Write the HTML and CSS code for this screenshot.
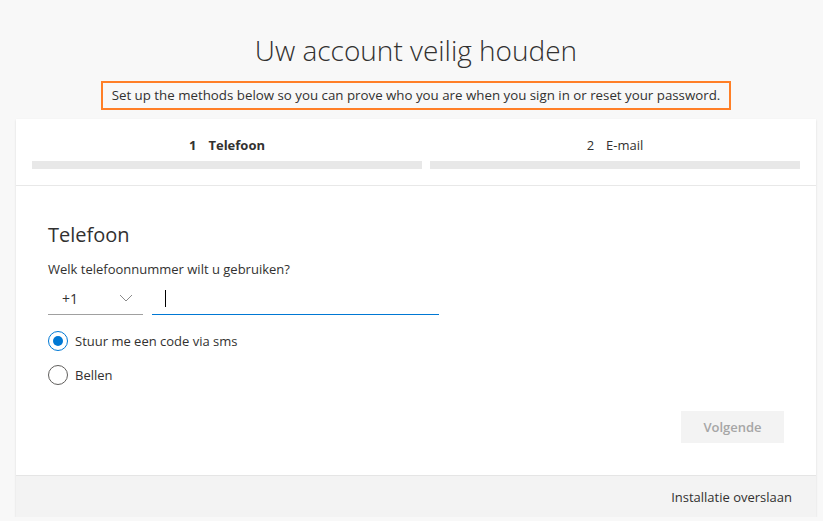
FILE: index.html
```html
<!DOCTYPE html>
<html>
<head>
<meta charset="utf-8">
<link rel="stylesheet" href="styles.css">
</head>
<body>
<div class="page">
  <header class="head">
    <h1 class="title">Uw account veilig houden</h1>
    <p class="subtitle">Set up the methods below so you can prove who you are when you sign in or reset your password.</p>
  </header>
  <section class="card">
    <div class="steps">
      <div class="step step-one">
        <div class="step-label active"><span class="num">1</span>Telefoon</div>
        <div class="bar"></div>
      </div>
      <div class="step step-two">
        <div class="step-label"><span class="num">2</span>E-mail</div>
        <div class="bar"></div>
      </div>
    </div>
    <div class="body">
      <h2 class="section-title">Telefoon</h2>
      <p class="question">Welk telefoonnummer wilt u gebruiken?</p>
      <div class="phone-row">
        <div class="country">
          <span>+1</span>
          <svg class="chev" width="14" height="8" viewBox="0 0 14 8"><path d="M1 1 L7 7 L13 1" fill="none" stroke="#8a8a8a" stroke-width="1"/></svg>
        </div>
        <div class="number"><span class="caret"></span></div>
      </div>
      <label class="radio"><span class="dot checked"></span>Stuur me een code via sms</label>
      <label class="radio"><span class="dot"></span>Bellen</label>
      <div class="actions">
        <button class="next">Volgende</button>
      </div>
    </div>
    <footer class="foot">
      <span class="skip">Installatie overslaan</span>
    </footer>
  </section>
</div>
</body>
</html>
```

FILE: styles.css
```css
html, body {
  margin: 0;
  padding: 0;
  background: #f8f8f8;
  font-family: "Open Sans", "Noto Sans", sans-serif;
  color: #323130;
}
.page {
  width: 800px;
  margin-left: 16px;
}
.head {
  display: flex;
  flex-direction: column;
  align-items: center;
  padding-top: 31px;
}
.title {
  margin: 0;
  font-weight: 300;
  font-size: 28px;
  line-height: 38px;
  color: #323130;
}
.subtitle {
  margin: 12px 0 9px;
  border: 2px solid #ff7f27;
  padding: 3px 9px;
  font-size: 13.3px;
  line-height: 19px;
  color: #323130;
}
.card {
  background: #fff;
  box-shadow: 0 1px 2px rgba(0,0,0,0.12);
}
.steps {
  display: flex;
  gap: 8px;
  padding: 16px 16px 16px;
  border-bottom: 1px solid #e8e8e8;
}
.step-one { width: 390px; }
.step-two { width: 370px; }
.step-label {
  text-align: center;
  font-size: 13px;
  line-height: 18px;
  padding-top: 1px;
  margin-bottom: 7px;
}
.step-label.active { font-weight: 700; }
.num { margin-right: 12px; }
.bar {
  height: 8px;
  background: #e8e8e8;
}
.body {
  padding: 35px 32px 32px;
}
.section-title {
  margin: 0;
  font-weight: 400;
  font-size: 20px;
  line-height: 28px;
}
.question {
  margin: 11px 0 0;
  font-size: 13px;
  line-height: 18px;
}
.phone-row {
  display: flex;
  gap: 9px;
  margin-top: 5px;
}
.country {
  width: 95px;
  height: 32px;
  box-sizing: border-box;
  border-bottom: 1px solid #a0a0a0;
  display: flex;
  align-items: center;
  justify-content: space-between;
  padding: 0 10px 0 14px;
  font-size: 14px;
}
.chev { margin-top: -2px; }
.number {
  width: 287px;
  height: 32px;
  box-sizing: border-box;
  border-bottom: 1px solid #0078d4;
  display: flex;
  align-items: center;
  padding-left: 13px;
}
.caret {
  width: 1px;
  height: 17px;
  background: #000;
}
.radio {
  display: flex;
  align-items: center;
  gap: 7px;
  font-size: 13px;
  line-height: 20px;
  margin-top: 14px;
}
.radio + .radio { margin-top: 14px; }
.phone-row + .radio { margin-top: 16px; }
.dot {
  width: 20px;
  height: 20px;
  box-sizing: border-box;
  border: 1px solid #605e5c;
  border-radius: 50%;
  position: relative;
}
.dot.checked { border-color: #0078d4; }
.dot.checked::after {
  content: "";
  position: absolute;
  left: 4px;
  top: 4px;
  width: 10px;
  height: 10px;
  border-radius: 50%;
  background: #0078d4;
}
.actions {
  display: flex;
  justify-content: flex-end;
  margin-top: 26px;
}
.next {
  width: 103px;
  height: 32px;
  border: none;
  background: #f3f3f3;
  color: #a6a6a6;
  font-family: inherit;
  font-weight: 600;
  font-size: 13px;
}
.foot {
  display: flex;
  justify-content: flex-end;
  align-items: center;
  height: 41px;
  border-top: 1px solid #e5e5e5;
  background: #f3f3f3;
  padding-right: 24px;
  font-size: 13px;
}
```
